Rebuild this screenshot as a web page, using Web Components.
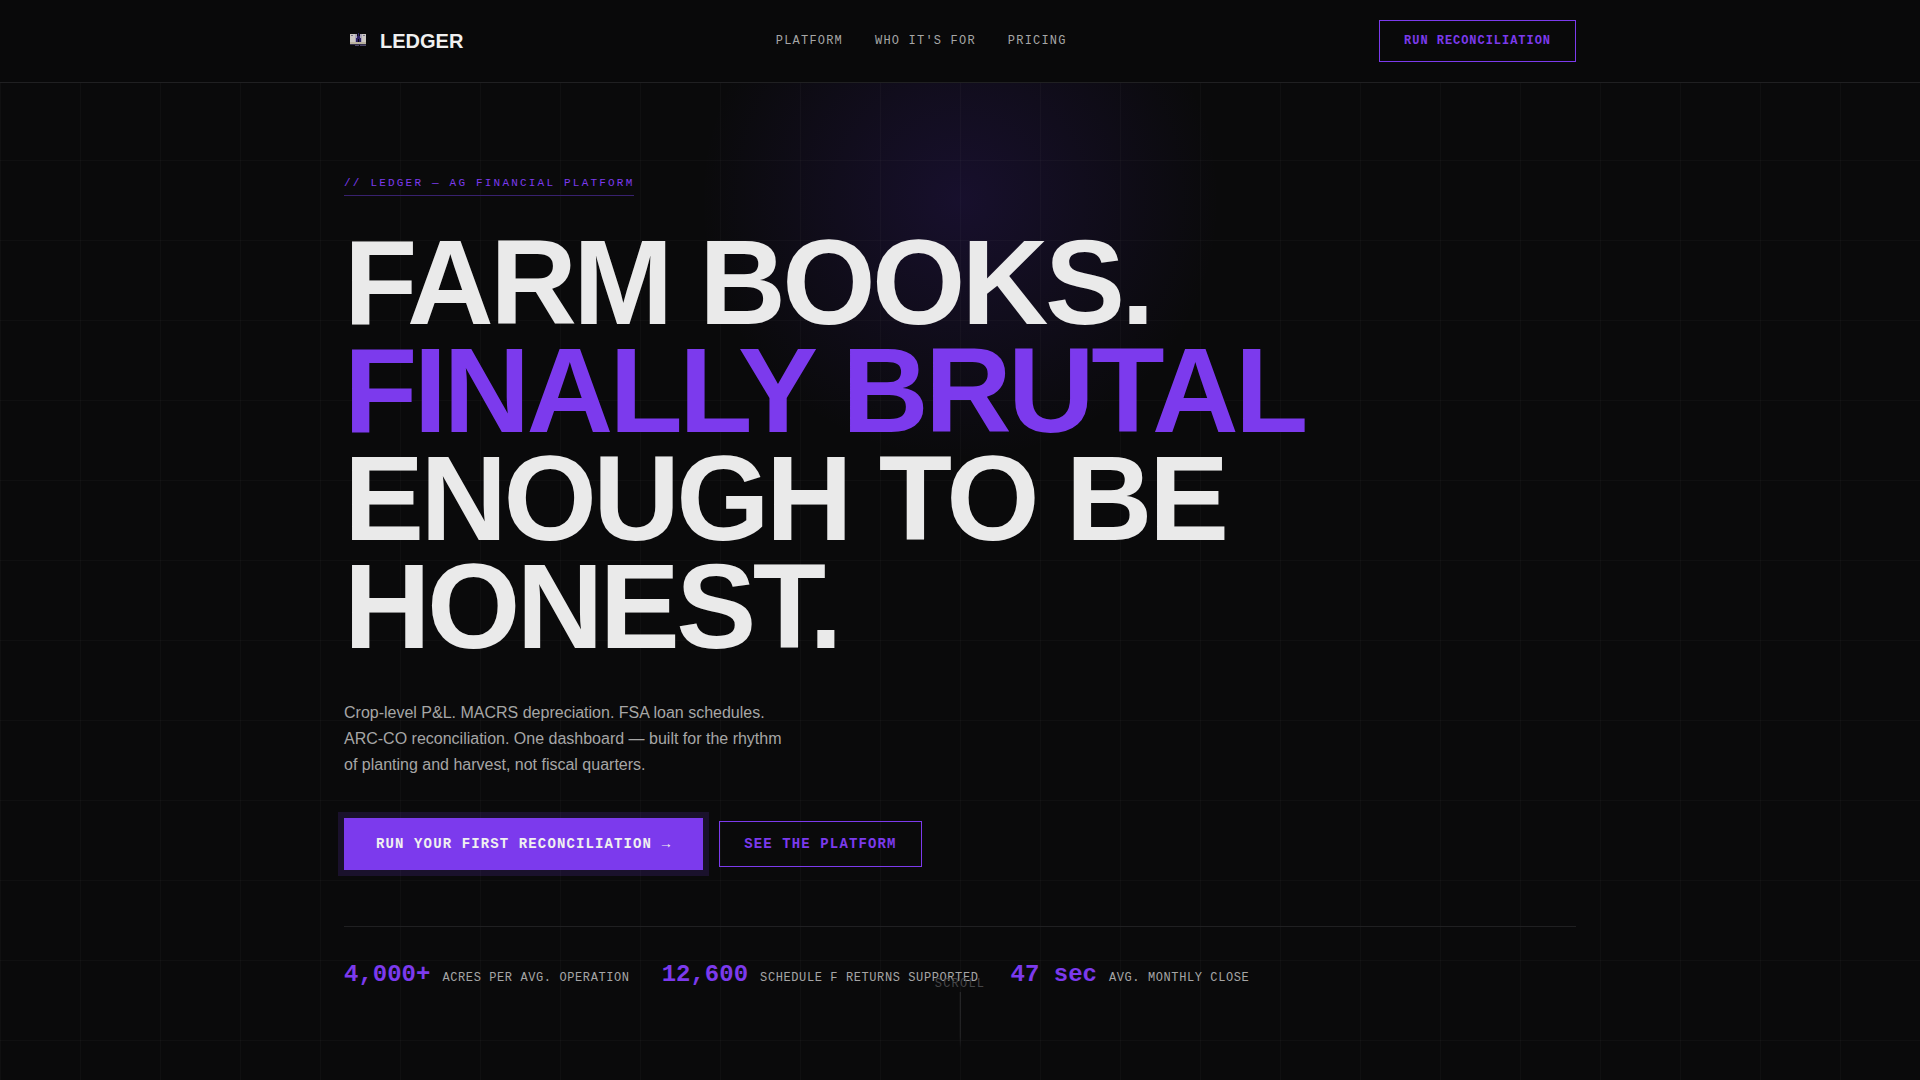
<!DOCTYPE html>
<html lang="en">
<head>
<meta charset="utf-8">
<title>Ledger — Ag Financial Platform</title>
<style>
  :root {
    --bg: #0a0a0b;
    --ink: #eaeaea;
    --muted: #a6a6a6;
    --accent: #7c3aed;
    --line: #202022;
    --mono: "Liberation Mono", monospace;
    --sans: "Liberation Sans", sans-serif;
  }
  body { margin: 0; background: var(--bg); color: var(--ink); font-family: var(--sans); }
</style>
</head>
<body>
<ledger-page></ledger-page>

<template id="t-page">
  <style>
    :host { display: flex; flex-direction: column; min-height: 100vh; }
    ledger-hero { flex: 1; }
  </style>
  <ledger-nav></ledger-nav>
  <ledger-hero></ledger-hero>
</template>

<template id="t-nav">
  <style>
    :host { display: block; border-bottom: 1px solid var(--line); background: #09090a; }
    header { display: flex; justify-content: space-between; align-items: center; box-sizing: border-box; max-width: 1280px; margin: 0 auto; padding: 20px 24px; }
    .brand { display: flex; align-items: center; gap: 8px; color: #f0f0f0; font-size: 20px; font-weight: 700; line-height: 24px; text-decoration: none; }
    svg { display: block; width: 28px; height: 28px; }
    nav { display: flex; gap: 32px; }
    nav a { color: var(--muted); font: 12px/16px var(--mono); letter-spacing: 0.1em; text-decoration: none; }
  </style>
  <header>
    <a class="brand" href="#top">
      <svg viewBox="0 0 28 28" aria-hidden="true">
        <path fill="#cbc7c3" d="M6 7h5v9H6zM18 7h4v9h-4z"/>
        <path fill="#77728c" d="M7 8h2v1H7zM19 8h2v1h-2z"/>
        <path fill="#a9a4b8" d="M11 7h2v9h-2zM16 7h2v9h-2z"/>
        <path fill="#2d2163" d="M14 6h1v3h1v2h1v4h-2v-3h-1v3h-2v-4h1V9h1z"/>
        <path fill="#b9b19f" d="M6 15h16v2H6z"/>
        <path fill="#34304a" d="M6 17h16v1H6z"/>
        <path fill="#4d4668" d="M11 18h4v1h-4zM16 18h6v1h-6z"/>
      </svg>
      <span>LEDGER</span>
    </a>
    <nav aria-label="Main">
      <a href="#platform">PLATFORM</a>
      <a href="#who">WHO IT'S FOR</a>
      <a href="#pricing">PRICING</a>
    </nav>
    <ledger-button size="small">RUN RECONCILIATION</ledger-button>
  </header>
</template>

<template id="t-button">
  <style>
    :host { display: inline-block; }
    button { display: block; margin: 0; padding: 14px 24px; border: 1px solid var(--accent); border-radius: 0; background: transparent; color: var(--accent); font: 700 14px/16px var(--mono); letter-spacing: 0.08em; white-space: nowrap; cursor: pointer; }
    :host([size="small"]) button { padding: 12px 24px; font-size: 12px; }
    :host([primary]) button { padding: 18px 32px; border: 0; background: var(--accent); color: #f0f0f0; box-shadow: 0 0 0 6px rgba(124, 58, 237, 0.15); }
  </style>
  <button type="button"><slot></slot></button>
</template>

<template id="t-stat">
  <style>
    :host { display: flex; align-items: baseline; gap: 12px; font-family: var(--mono); }
    .value { color: var(--accent); font-size: 24px; font-weight: 700; line-height: 32px; }
    .label { color: var(--muted); font-size: 12px; line-height: 16px; letter-spacing: 0.05em; }
  </style>
  <span class="value"><slot name="value"></slot></span>
  <span class="label"><slot></slot></span>
</template>

<template id="t-scroll">
  <style>
    :host { display: flex; flex-direction: column; align-items: center; color: #454547; font: 12px/16px var(--mono); letter-spacing: 0.1em; }
    i { width: 1px; height: 56px; background: linear-gradient(#2c2c2e, #242426 80%, transparent); }
  </style>
  <span>SCROLL</span>
  <i></i>
</template>

<template id="t-hero">
  <style>
    :host {
      display: block; position: relative;
      background:
        linear-gradient(rgba(255, 255, 255, 0.025) 1px, transparent 1px) 0 -3px / 80px 80px,
        linear-gradient(90deg, rgba(255, 255, 255, 0.025) 1px, transparent 1px) 0 0 / 80px 80px,
        radial-gradient(circle 260px at 50% 117px, rgba(100, 48, 237, 0.15), transparent);
    }
    section { display: flex; flex-direction: column; align-items: flex-start; box-sizing: border-box; max-width: 1280px; margin: 0 auto; padding: 94px 24px 80px; }
    .eyebrow { margin: 0 0 32px; padding-bottom: 6px; border-bottom: 1px solid #38216e; color: var(--accent); font: 11px/12px var(--mono); letter-spacing: 0.2em; }
    h1 { margin: 0 0 40px; font-size: 120px; font-weight: 700; line-height: 108px; letter-spacing: -0.03em; }
    h1 span { display: block; }
    .hot { color: var(--accent); }
    p.lead { max-width: 448px; margin: 0 0 40px; color: var(--muted); font-size: 16px; line-height: 26px; }
    .actions { display: flex; align-items: center; gap: 16px; margin-bottom: 56px; }
    .stats { display: flex; gap: 32px; align-self: stretch; padding-top: 32px; border-top: 1px solid var(--line); }
    ledger-scroll { position: absolute; bottom: 32px; left: 50%; transform: translateX(-50%); }
  </style>
  <section>
    <div class="eyebrow">// LEDGER — AG FINANCIAL PLATFORM</div>
    <h1><span>FARM BOOKS.</span><span class="hot">FINALLY BRUTAL</span><span>ENOUGH TO BE</span><span>HONEST.</span></h1>
    <p class="lead">Crop-level P&amp;L. MACRS depreciation. FSA loan schedules. ARC-CO reconciliation. One dashboard — built for the rhythm of planting and harvest, not fiscal quarters.</p>
    <div class="actions">
      <ledger-button primary>RUN YOUR FIRST RECONCILIATION →</ledger-button>
      <ledger-button>SEE THE PLATFORM</ledger-button>
    </div>
    <div class="stats">
      <ledger-stat><span slot="value">4,000+</span>ACRES PER AVG. OPERATION</ledger-stat>
      <ledger-stat><span slot="value">12,600</span>SCHEDULE F RETURNS SUPPORTED</ledger-stat>
      <ledger-stat><span slot="value">47 sec</span>AVG. MONTHLY CLOSE</ledger-stat>
    </div>
  </section>
  <ledger-scroll></ledger-scroll>
</template>

<script>
  const define = (name) => {
    const template = document.getElementById("t-" + name);
    customElements.define("ledger-" + name, class extends HTMLElement {
      constructor() {
        super();
        this.attachShadow({ mode: "open" }).append(template.content.cloneNode(true));
      }
    });
  };
  ["button", "stat", "scroll", "nav", "hero", "page"].forEach(define);
</script>
</body>
</html>
